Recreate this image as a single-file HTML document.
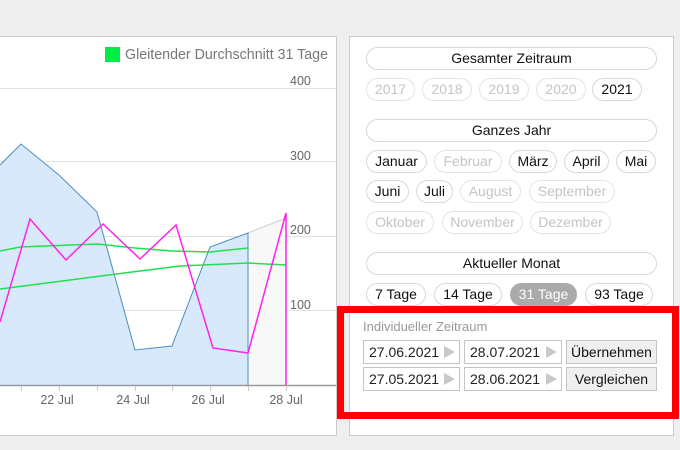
<!DOCTYPE html>
<html><head><style>
*{box-sizing:border-box;margin:0;padding:0}
body{width:680px;height:450px;background:#efefef;position:relative;overflow:hidden;font-family:"Liberation Sans",sans-serif}
.p{position:absolute;background:#fff;border:1px solid #ccc}
.b{position:absolute;height:23px;border:1px solid #d8d8d8;border-radius:12px;font-size:14px;line-height:21px;text-align:center;color:#111;background:#fff}
.d{color:#c4c4c4;border-color:#e4e4e4}
.in{position:absolute;height:24px;border:1px solid #c4c4c4;font-size:14px;line-height:22px;padding-left:5px;color:#222;background:#fff}
.in i{position:absolute;right:4px;top:5px;width:0;height:0;border-left:11px solid #c8c8c8;border-top:6px solid transparent;border-bottom:6px solid transparent}
.bt{position:absolute;height:24px;border:1px solid #c4c4c4;background:#efefef;font-size:14px;line-height:22px;text-align:center;color:#111}
</style></head><body>
<div class="p" style="left:-2px;top:36px;width:339px;height:400px"></div>
<svg style="position:absolute;left:0;top:0" width="340" height="450">
<g stroke="#e2e2e2" stroke-width="1"><line x1="0" y1="88.5" x2="336" y2="88.5"/><line x1="0" y1="161.5" x2="336" y2="161.5"/><line x1="0" y1="236.5" x2="336" y2="236.5"/><line x1="0" y1="310.5" x2="336" y2="310.5"/></g>
<polygon points="248,233 286,218 286,385 248,385" fill="#f8f8f8"/>
<line x1="248" y1="233" x2="286" y2="218" stroke="#ccc"/>
<polygon points="0,165 21,144 59,175 97,212 135,350 172,346 210,247 248,233 248,385 0,385" fill="#d8e9fb"/>
<polyline points="0,165 21,144 59,175 97,212 135,350 172,346 210,247 248,233 248,385" fill="none" stroke="#4a8ec0" stroke-width="1"/>
<polyline points="0,251 20,247 97,244 135,248 172,251 210,252 248,248" fill="none" stroke="#22e050" stroke-width="1.5"/>
<polyline points="0,289 70,280 140,271 180,266 248,263 286,265" fill="none" stroke="#22e050" stroke-width="1.5"/>
<polyline points="0,322 30,219 66,260 103,224 140,259 176,225 213,348 248,353 286,213 286,385" fill="none" stroke="#ff22ee" stroke-width="1.5"/>
<line x1="0" y1="385.5" x2="336" y2="385.5" stroke="#999" stroke-width="1.5"/>
<g stroke="#ccc"><line x1="21.5" y1="386" x2="21.5" y2="391"/><line x1="59.5" y1="386" x2="59.5" y2="391"/><line x1="97.5" y1="386" x2="97.5" y2="391"/><line x1="135.5" y1="386" x2="135.5" y2="391"/><line x1="172.5" y1="386" x2="172.5" y2="391"/><line x1="210.5" y1="386" x2="210.5" y2="391"/><line x1="248.5" y1="386" x2="248.5" y2="391"/><line x1="286.5" y1="386" x2="286.5" y2="391"/></g>
<g font-family="Liberation Sans" font-size="12.5" fill="#666"><text x="290" y="85">400</text><text x="290" y="160">300</text><text x="290" y="234">200</text><text x="290" y="309">100</text>
<text x="57" y="404" text-anchor="middle">22 Jul</text><text x="133" y="404" text-anchor="middle">24 Jul</text><text x="208" y="404" text-anchor="middle">26 Jul</text><text x="286" y="404" text-anchor="middle">28 Jul</text></g>
<rect x="105" y="47" width="15" height="15" fill="#00ee44"/>
<text x="125" y="59" font-family="Liberation Sans" font-size="14.6" fill="#777" textLength="203" lengthAdjust="spacingAndGlyphs">Gleitender Durchschnitt 31 Tage</text>
</svg>
<div class="p" style="left:349px;top:36px;width:325px;height:400px"></div>
<div class="b" style="left:366px;top:47px;width:291px">Gesamter Zeitraum</div>
<div class="b d" style="left:366px;top:78px;width:49px">2017</div>
<div class="b d" style="left:422px;top:78px;width:50px">2018</div>
<div class="b d" style="left:479px;top:78px;width:50px">2019</div>
<div class="b d" style="left:536px;top:78px;width:50px">2020</div>
<div class="b" style="left:592px;top:78px;width:50px">2021</div>
<div class="b" style="left:366px;top:119px;width:291px">Ganzes Jahr</div>
<div class="b" style="left:366px;top:150px;width:61px">Januar</div>
<div class="b d" style="left:434px;top:150px;width:68px">Februar</div>
<div class="b" style="left:509px;top:150px;width:48px">März</div>
<div class="b" style="left:564px;top:150px;width:45px">April</div>
<div class="b" style="left:616px;top:150px;width:40px">Mai</div>
<div class="b" style="left:366px;top:180px;width:43px">Juni</div>
<div class="b" style="left:416px;top:180px;width:37px">Juli</div>
<div class="b d" style="left:460px;top:180px;width:61px">August</div>
<div class="b d" style="left:529px;top:180px;width:86px">September</div>
<div class="b d" style="left:366px;top:211px;width:68px">Oktober</div>
<div class="b d" style="left:442px;top:211px;width:81px">November</div>
<div class="b d" style="left:530px;top:211px;width:81px">Dezember</div>
<div class="b" style="left:366px;top:252px;width:291px">Aktueller Monat</div>
<div class="b" style="left:366px;top:283px;width:60px">7 Tage</div>
<div class="b" style="left:434px;top:283px;width:68px">14 Tage</div>
<div class="b" style="left:510px;top:283px;width:67px;background:#aaa;border-color:#aaa;color:#fff">31 Tage</div>
<div class="b" style="left:585px;top:283px;width:68px">93 Tage</div>
<div style="position:absolute;left:337px;top:306px;width:342px;height:113px;border:7px solid #f00"></div>
<div style="position:absolute;left:363px;top:319px;font-size:13px;color:#999">Individueller Zeitraum</div>
<div class="in" style="left:363px;top:340px;width:97px">27.06.2021<i></i></div>
<div class="in" style="left:464px;top:340px;width:98px">28.07.2021<i></i></div>
<div class="bt" style="left:566px;top:340px;width:91px">Übernehmen</div>
<div class="in" style="left:363px;top:367px;width:97px">27.05.2021<i></i></div>
<div class="in" style="left:464px;top:367px;width:98px">28.06.2021<i></i></div>
<div class="bt" style="left:566px;top:367px;width:91px">Vergleichen</div>
</body></html>
